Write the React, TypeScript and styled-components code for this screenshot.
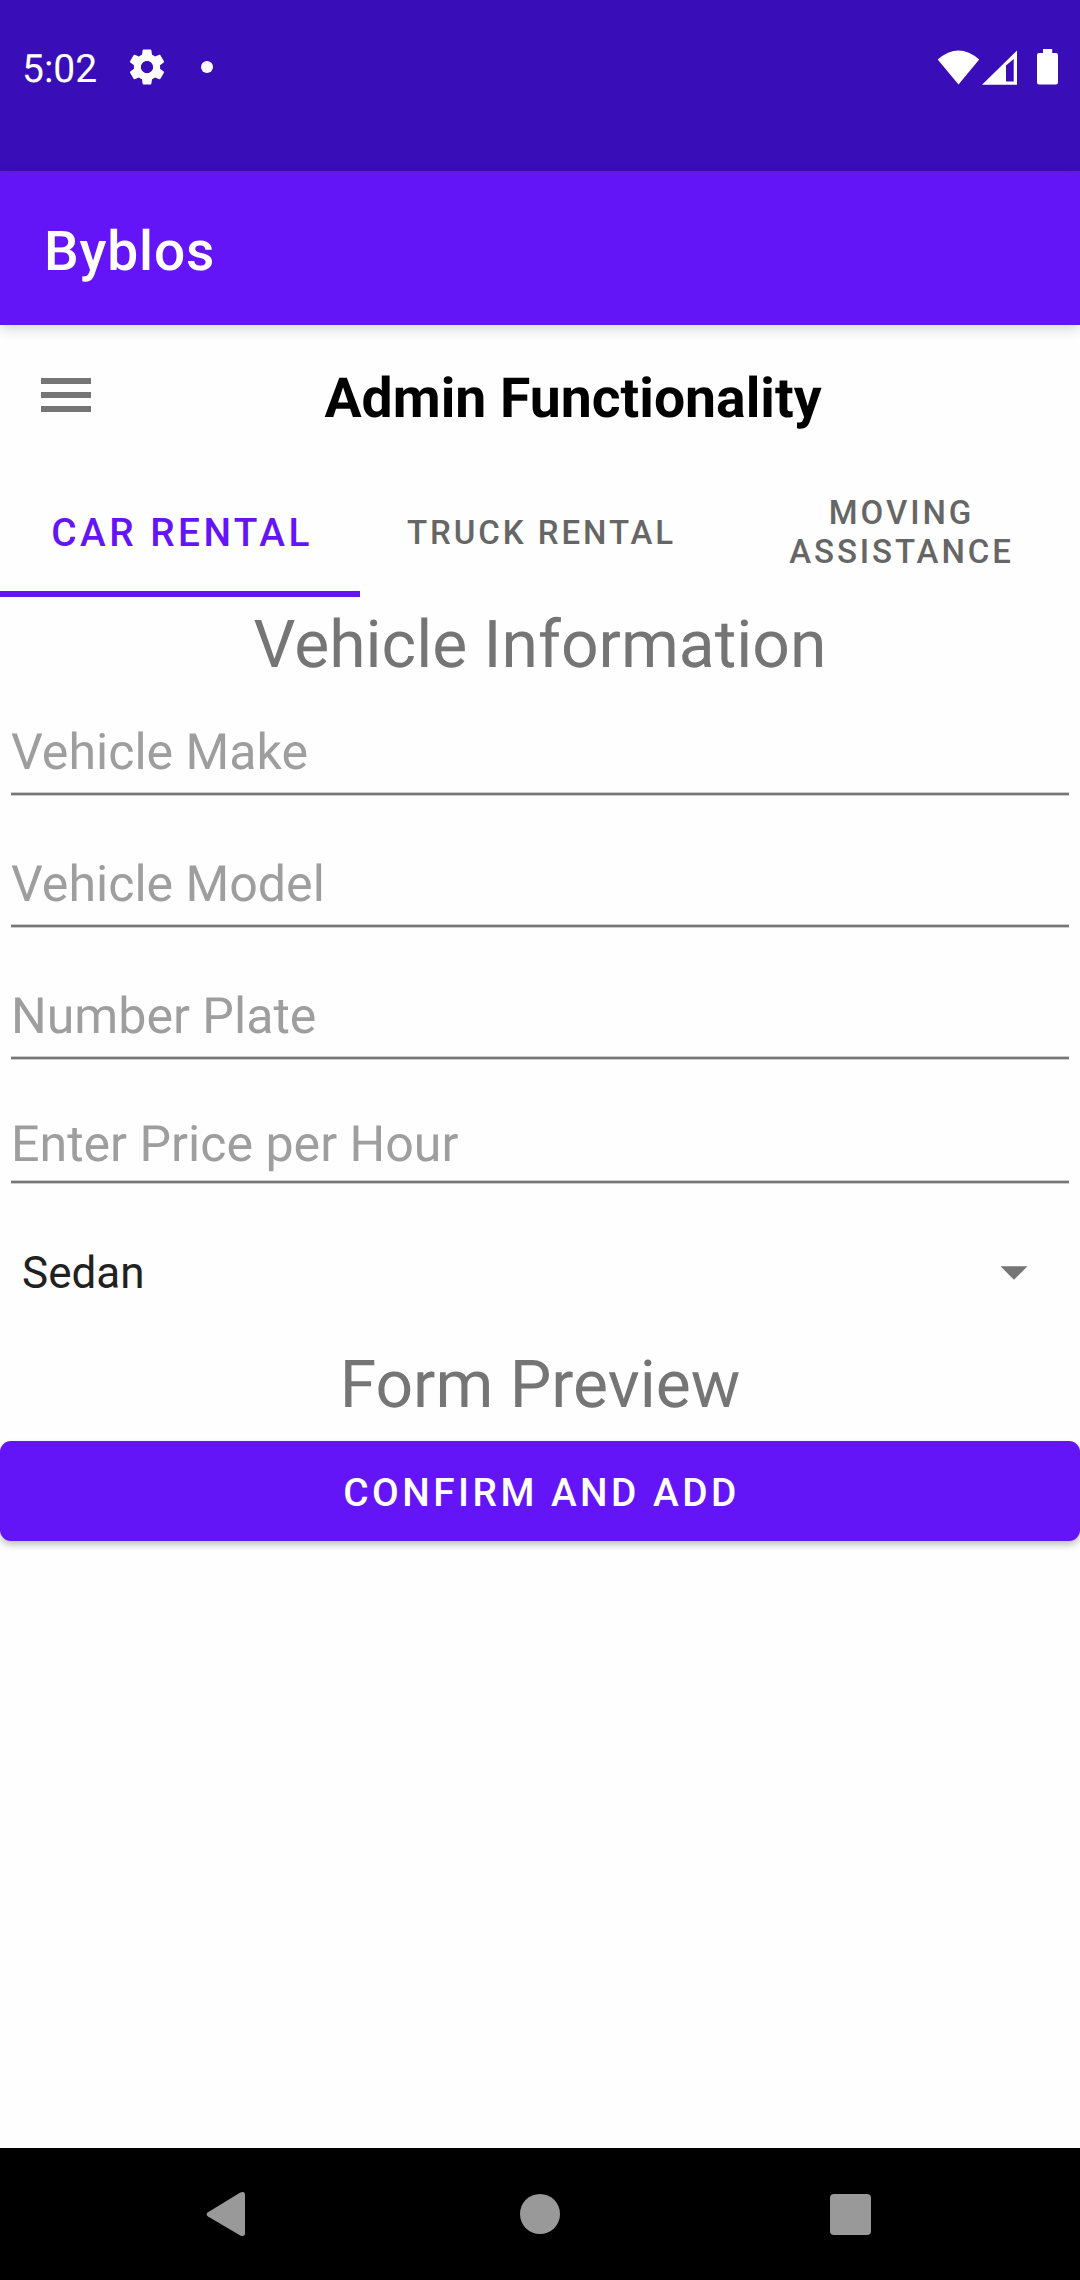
import React, { useState } from "react";
import styled, { createGlobalStyle } from "styled-components";

const color = {
  primary: "#6415f7",
  primaryDark: "#390eb8",
  surface: "#fefefe",
  secondaryText: "#757575",
  hint: "#9e9e9e",
  tabText: "#666666",
  navIcon: "#999999",
};

const GlobalStyle = createGlobalStyle`
  *, *::before, *::after { box-sizing: border-box; }
  body {
    margin: 0;
    background: ${color.surface};
    font-family: Roboto, "Noto Sans", sans-serif;
    text-rendering: geometricPrecision;
  }
  button {
    margin: 0;
    padding: 0;
    border: 0;
    background: none;
    font: inherit;
    color: inherit;
    cursor: pointer;
  }
  svg { display: block; }
`;

const Screen = styled.div`
  display: flex;
  flex-direction: column;
  width: 1080px;
  height: 2280px;
  background: ${color.surface};
  overflow: hidden;
`;

const StatusBar = styled.header`
  display: flex;
  justify-content: space-between;
  align-items: flex-start;
  height: 171px;
  padding: 47px 22px 0;
  background: ${color.primaryDark};
  color: #fff;
`;

const StatusGroup = styled.div`
  display: flex;
  align-items: center;
  height: 41px;
`;

const NotificationGroup = styled(StatusGroup)`
  height: 40px;
`;

const Clock = styled.span`
  width: 104px;
  padding-top: 4px;
  font-size: 39px;
  line-height: 41px;
`;

const NotificationDot = styled.span`
  width: 12px;
  height: 12px;
  margin-left: 33px;
  border-radius: 50%;
  background: #fff;
`;

const AppBar = styled.div`
  z-index: 1;
  display: flex;
  align-items: center;
  flex: none;
  height: 154px;
  padding: 8px 44px 0;
  background: ${color.primary};
  box-shadow: 0 4px 12px rgba(0, 0, 0, 0.16);
`;

const AppTitle = styled.h1`
  margin: 0;
  color: #fff;
  font-size: 55px;
  font-weight: 500;
  line-height: 66px;
  letter-spacing: 0.85px;
`;

const PageHeader = styled.div`
  display: flex;
  flex: none;
  height: 140px;
  padding-top: 3px;
`;

const MenuButton = styled.button`
  display: flex;
  flex-direction: column;
  justify-content: center;
  align-items: center;
  gap: 8px;
  width: 132px;
  height: 134px;
`;

const MenuLine = styled.span`
  width: 50px;
  height: 6px;
  background: ${color.secondaryText};
`;

const PageTitle = styled.h2`
  flex: 1;
  margin: 0;
  padding-right: 66px;
  color: #000;
  font-size: 55.3px;
  font-weight: 700;
  line-height: 142px;
  text-align: center;
`;

const TabBar = styled.nav`
  display: grid;
  grid-template-columns: repeat(3, 1fr);
  flex: none;
  height: 132px;
`;

const Tab = styled.button<{ $active: boolean }>`
  display: flex;
  align-items: center;
  justify-content: center;
  padding: ${(p) => (p.$active ? "8px 0 0 4px" : "8px 31px 0 34px")};
  border-bottom: 6px solid ${(p) => (p.$active ? color.primary : "transparent")};
  color: ${(p) => (p.$active ? color.primary : color.tabText)};
  font-size: ${(p) => (p.$active ? "38.8px" : "33px")};
  font-weight: 500;
  line-height: 39px;
  letter-spacing: 0.0893em;
  text-transform: uppercase;
`;

const Form = styled.main`
  display: flex;
  flex-direction: column;
  flex: 1;
`;

const SectionTitle = styled.h3<{ $top: number; $height: number }>`
  height: ${(p) => p.$height}px;
  margin: 0;
  padding-top: ${(p) => p.$top}px;
  color: ${color.secondaryText};
  font-size: 66px;
  font-weight: 400;
  line-height: 77px;
  text-align: center;
`;

const Field = styled.div<{ $compact?: boolean }>`
  display: flex;
  flex-direction: column;
  justify-content: space-between;
  height: ${(p) => (p.$compact ? 105 : 113)}px;
  margin: 0 11px ${(p) => (p.$compact ? 23 : 19)}px;
  padding-top: ${(p) => (p.$compact ? 36 : 40)}px;
`;

const Hint = styled.span`
  color: ${color.hint};
  font-size: 50.1px;
  line-height: 60px;
`;

const Underline = styled.span`
  height: 4px;
  border: solid #cccccc;
  border-width: 1px 0;
  background: ${color.secondaryText};
`;

const Spinner = styled.button`
  display: flex;
  align-items: center;
  justify-content: space-between;
  height: 132px;
  padding: 0 52px 0 22px;
  color: #212121;
  font-size: 44px;
  line-height: 52px;
`;

const ConfirmButton = styled.button`
  height: 100px;
  padding: 2px 0 0 3px;
  border-radius: 11px;
  background: ${color.primary};
  box-shadow: 0 4px 7px rgba(0, 0, 0, 0.24);
  color: #fff;
  font-size: 38.8px;
  font-weight: 500;
  letter-spacing: 0.0893em;
  text-transform: uppercase;
`;

const NavigationBar = styled.footer`
  display: flex;
  align-items: center;
  flex: none;
  height: 132px;
  padding: 0 204px;
  justify-content: space-between;
  background: #000;
`;

const GearIcon = () => (
  <svg width="42" height="42" viewBox="0 0 24 24" fill="#fff">
    <path d="M19.43 12.98c.04-.32.07-.64.07-.98s-.03-.66-.07-.98l2.11-1.65c.19-.15.24-.42.12-.64l-2-3.46c-.12-.22-.39-.3-.61-.22l-2.49 1c-.52-.4-1.08-.73-1.69-.98l-.38-2.65C14.46 2.18 14.25 2 14 2h-4c-.25 0-.46.18-.49.42l-.38 2.65c-.61.25-1.17.59-1.69.98l-2.49-1c-.23-.09-.49 0-.61.22l-2 3.46c-.13.22-.07.49.12.64l2.11 1.65c-.04.32-.07.65-.07.98s.03.66.07.98l-2.11 1.65c-.19.15-.24.42-.12.64l2 3.46c.12.22.39.3.61.22l2.49-1c.52.4 1.08.73 1.69.98l.38 2.65c.03.24.24.42.49.42h4c.25 0 .46-.18.49-.42l.38-2.65c.61-.25 1.17-.59 1.69-.98l2.49 1c.23.09.49 0 .61-.22l2-3.46c.12-.22.07-.49-.12-.64l-2.11-1.65zM12 15.5c-1.93 0-3.5-1.57-3.5-3.5s1.57-3.5 3.5-3.5 3.5 1.57 3.5 3.5-1.57 3.5-3.5 3.5z" />
  </svg>
);

const SignalIcons = () => (
  <svg width="121" height="41" viewBox="937 47 121 41" fill="#fff">
    <path d="M937.7 59.5Q958.5 41.5 979.2 59.5L958.5 84.5Z" />
    <path fillRule="evenodd" d="M982 84.8L1017 50.5V84.8ZM1006 65.5V81.5H1013.7V59Z" />
    <path d="M1043 49h9.2v4h3.8q2 0 2 2v27.5q0 2-2 2h-17q-2 0-2-2V55q0-2 2-2h4z" />
  </svg>
);

const DropdownArrow = () => (
  <svg width="28" height="14" viewBox="0 0 28 14" fill={color.secondaryText}>
    <path d="M.5.3h27L14 13.8z" />
  </svg>
);

const BackIcon = () => (
  <svg width="44" height="48" viewBox="0 0 44 48" fill={color.navIcon}>
    <path d="M4 22.2L36.3 2.6Q41 .4 41 5.2V42.800Q41 47.600 36.300 45.400L4 26.400Q1.200 24.300 4 22.200Z" />
  </svg>
);

const HomeIcon = () => (
  <svg width="42" height="40" viewBox="-2 0 42 40" fill={color.navIcon}>
    <circle cx="20" cy="20" r="20" />
  </svg>
);

const RecentsIcon = () => (
  <svg width="46" height="41" viewBox="0 0 46 41" fill={color.navIcon}>
    <rect width="41" height="41" rx="4" />
  </svg>
);

const tabs = ["Car Rental", "Truck Rental", "Moving Assistance"];
const fields = ["Vehicle Make", "Vehicle Model", "Number Plate", "Enter Price per Hour"];

export default function App() {
  const [activeTab, setActiveTab] = useState(0);

  return (
    <>
      <GlobalStyle />
      <Screen>
        <StatusBar>
          <NotificationGroup>
            <Clock>5:02</Clock>
            <GearIcon />
            <NotificationDot />
          </NotificationGroup>
          <StatusGroup>
            <SignalIcons />
          </StatusGroup>
        </StatusBar>
        <AppBar>
          <AppTitle>Byblos</AppTitle>
        </AppBar>
        <PageHeader>
          <MenuButton aria-label="Menu">
            <MenuLine />
            <MenuLine />
            <MenuLine />
          </MenuButton>
          <PageTitle>Admin Functionality</PageTitle>
        </PageHeader>
        <TabBar>
          {tabs.map((name, i) => (
            <Tab key={name} $active={i === activeTab} onClick={() => setActiveTab(i)}>
              {name}
            </Tab>
          ))}
        </TabBar>
        <Form>
          <SectionTitle $top={10} $height={86}>
            Vehicle Information
          </SectionTitle>
          {fields.map((name, i) => (
            <Field key={name} $compact={i === fields.length - 1}>
              <Hint>{name}</Hint>
              <Underline />
            </Field>
          ))}
          <Spinner>
            Sedan
            <DropdownArrow />
          </Spinner>
          <SectionTitle $top={8} $height={102}>
            Form Preview
          </SectionTitle>
          <ConfirmButton>Confirm and Add</ConfirmButton>
        </Form>
        <NavigationBar>
          <BackIcon />
          <HomeIcon />
          <RecentsIcon />
        </NavigationBar>
      </Screen>
    </>
  );
}
